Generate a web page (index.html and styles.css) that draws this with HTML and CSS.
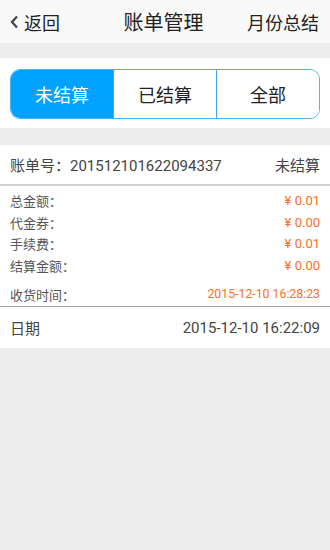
FILE: index.html
```html
<!DOCTYPE html>
<html lang="zh-CN">
<head>
    <meta charset="UTF-8">
    <meta name="viewport" content="width=device-width, initial-scale=1.0">
    <title>账单管理</title>
    <link rel="stylesheet" href="styles.css">
</head>
<body>
    <div class="header">
        <div class="back">
            <svg class="back-icon" width="9" height="14" viewBox="0 0 9 14">
                <polyline points="7,1.5 2,7 7,12.5" fill="none" stroke="#444" stroke-width="2.2"/>
            </svg>
            <span>返回</span>
        </div>
        <div class="title">账单管理</div>
        <div class="summary">月份总结</div>
    </div>

    <div class="tabs-wrap">
        <div class="tabs">
            <div class="tab active">未结算</div>
            <div class="tab">已结算</div>
            <div class="tab">全部</div>
        </div>
    </div>

    <div class="bill">
        <div class="bill-head">
            <span>账单号：201512101622094337</span>
            <span>未结算</span>
        </div>
        <div class="bill-body">
            <div class="line"><span>总金额：</span><span class="money">¥ 0.01</span></div>
            <div class="line"><span>代金券：</span><span class="money">¥ 0.00</span></div>
            <div class="line"><span>手续费：</span><span class="money">¥ 0.01</span></div>
            <div class="line"><span>结算金额：</span><span class="money">¥ 0.00</span></div>
            <div class="line line-time"><span>收货时间：</span><span class="money time">2015-12-10 16:28:23</span></div>
        </div>
        <div class="bill-foot">
            <span>日期</span>
            <span>2015-12-10 16:22:09</span>
        </div>
    </div>
</body>
</html>
```

FILE: styles.css
```css
* {
    margin: 0;
    padding: 0;
    box-sizing: border-box;
}

body {
    font-family: Roboto, "Noto Sans CJK SC", sans-serif;
    background: #ededed;
    color: #333;
    width: 330px;
    min-height: 550px;
}

.header {
    height: 43px;
    background: #f9f9f9;
    display: flex;
    align-items: center;
    justify-content: space-between;
    padding: 0 11px 0 10px;
    color: #222;
}

.back {
    display: flex;
    align-items: center;
    gap: 5px;
    font-size: 18px;
    width: 70px;
}

.back-icon {
    display: block;
}

.title {
    font-size: 20px;
}

.summary {
    font-size: 18px;
    width: 72px;
    text-align: right;
}

.tabs-wrap {
    margin-top: 15px;
    background: #fff;
    padding: 11px 10px 9px;
}

.tabs {
    display: flex;
    height: 50px;
    border: 1px solid #4bb3f7;
    border-radius: 10px;
    overflow: hidden;
}

.tab {
    flex: 1;
    display: flex;
    align-items: center;
    justify-content: center;
    font-size: 18px;
    color: #222;
    background: #fff;
}

.tab + .tab {
    border-left: 1px solid #3aaaf5;
}

.tab.active {
    background: #00a2ff;
    color: #fff;
}

.bill {
    margin-top: 17px;
    background: #fff;
}

.bill-head {
    height: 41px;
    display: flex;
    align-items: center;
    justify-content: space-between;
    padding: 0 10px;
    font-size: 15px;
    color: #444;
    border-bottom: 2px solid #d2d2d2;
}

.bill-body {
    padding: 4px 10px 1px;
    border-bottom: 1px solid #a8a8a8;
}

.line {
    height: 21.5px;
    display: flex;
    align-items: center;
    justify-content: space-between;
    font-size: 13px;
    color: #555;
}

.line-time {
    height: 22px;
    margin-top: 7px;
}

.money {
    color: #fb6f1d;
}

.time {
    font-size: 12.3px;
}

.bill-foot {
    height: 41px;
    display: flex;
    align-items: center;
    justify-content: space-between;
    padding: 0 10px;
    font-size: 15px;
    color: #444;
}
```
